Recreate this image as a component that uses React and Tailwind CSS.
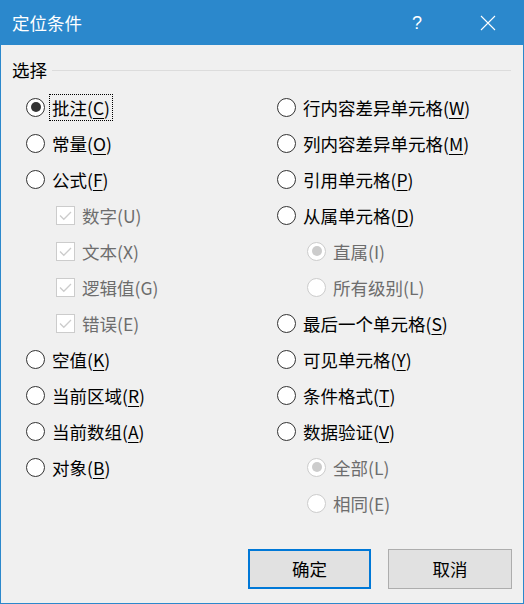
import React from "react";

const FONT = { fontFamily: '"Noto Sans CJK SC", "Noto Sans", sans-serif' };

function Label({ text, mn, disabled }) {
  return (
    <span className={disabled ? "text-[#6d6d6d]" : "text-black"}>
      {text}(
      {disabled ? mn : <span className="underline underline-offset-[3px] decoration-1">{mn}</span>})
    </span>
  );
}

function Radio({ checked, disabled }) {
  return (
    <span
      className={
        "w-[19px] h-[19px] shrink-0 rounded-full border flex items-center justify-center bg-white " +
        (disabled ? "border-[#cccccc]" : "border-[#333333]")
      }
    >
      {checked && (
        <span
          className={
            "w-[10px] h-[10px] rounded-full " + (disabled ? "bg-[#cccccc]" : "bg-[#333333]")
          }
        />
      )}
    </span>
  );
}

function Check() {
  return (
    <span className="w-[19px] h-[19px] shrink-0 border border-[#cccccc] bg-white flex items-center justify-center">
      <svg width="15" height="15" viewBox="0 0 15 15" fill="none">
        <path d="M2 7.5 L5.8 11.3 L13 4" stroke="#cccccc" strokeWidth="1.3" />
      </svg>
    </span>
  );
}

function RadioRow({ text, mn, checked, disabled, indent, focus }) {
  return (
    <div className={"h-[36px] flex items-center " + (indent ? "pl-[30px]" : "")}>
      <Radio checked={checked} disabled={disabled} />
      <span
        className={
          "ml-[4px] px-[2px] leading-[25px] border border-dotted " +
          (focus ? "border-black" : "border-transparent")
        }
      >
        <Label text={text} mn={mn} disabled={disabled} />
      </span>
    </div>
  );
}

function CheckRow({ text, mn }) {
  return (
    <div className="h-[36px] flex items-center pl-[30px]">
      <Check />
      <span className="ml-[4px] px-[2px] leading-[25px] border border-transparent">
        <Label text={text} mn={mn} disabled />
      </span>
    </div>
  );
}

export default function App() {
  return (
    <div
      className="w-[524px] h-[604px] flex flex-col bg-[#f0f0f0] border border-t-0 border-[#2b88cc] text-[17.5px] select-none"
      style={FONT}
    >
      <div className="h-[45px] shrink-0 bg-[#2b88cc] flex items-center text-white -mx-px">
        <span className="pl-[12px] text-[17.5px] leading-none">定位条件</span>
        <span className="ml-auto mr-[58px] text-[18px] leading-none font-light" style={{ fontFamily: '"Liberation Sans", sans-serif' }}>?</span>
        <svg className="mr-[28px]" width="16" height="16" viewBox="0 0 16 16" fill="none">
          <path d="M1 1 L15 15 M15 1 L1 15" stroke="white" strokeWidth="1.1" />
        </svg>
      </div>

      <div className="mt-[13px] h-[24px] flex items-center pl-[11px] pr-[12px]">
        <span className="leading-[24px]">选择</span>
        <span className="ml-[5px] flex-1 h-px bg-[#dcdcdc]" />
      </div>

      <div className="mt-[7px] grid grid-cols-[276px_1fr]">
        <div className="pl-[25px] flex flex-col">
          <RadioRow text="批注" mn="C" checked focus />
          <RadioRow text="常量" mn="O" />
          <RadioRow text="公式" mn="F" />
          <CheckRow text="数字" mn="U" />
          <CheckRow text="文本" mn="X" />
          <CheckRow text="逻辑值" mn="G" />
          <CheckRow text="错误" mn="E" />
          <RadioRow text="空值" mn="K" />
          <RadioRow text="当前区域" mn="R" />
          <RadioRow text="当前数组" mn="A" />
          <RadioRow text="对象" mn="B" />
        </div>
        <div className="flex flex-col">
          <RadioRow text="行内容差异单元格" mn="W" />
          <RadioRow text="列内容差异单元格" mn="M" />
          <RadioRow text="引用单元格" mn="P" />
          <RadioRow text="从属单元格" mn="D" />
          <RadioRow text="直属" mn="I" checked disabled indent />
          <RadioRow text="所有级别" mn="L" disabled indent />
          <RadioRow text="最后一个单元格" mn="S" />
          <RadioRow text="可见单元格" mn="Y" />
          <RadioRow text="条件格式" mn="T" />
          <RadioRow text="数据验证" mn="V" />
          <RadioRow text="全部" mn="L" checked disabled indent />
          <RadioRow text="相同" mn="E" disabled indent />
        </div>
      </div>

      <div className="mt-auto mb-[14px] flex justify-end gap-[17px] pr-[11px]">
        <button className="w-[123px] h-[40px] bg-[#e1e1e1] border-2 border-[#0078d7] text-black text-[17.5px]">
          确定
        </button>
        <button className="w-[124px] h-[40px] bg-[#e1e1e1] border border-[#adadad] text-black text-[17.5px]">
          取消
        </button>
      </div>
    </div>
  );
}
